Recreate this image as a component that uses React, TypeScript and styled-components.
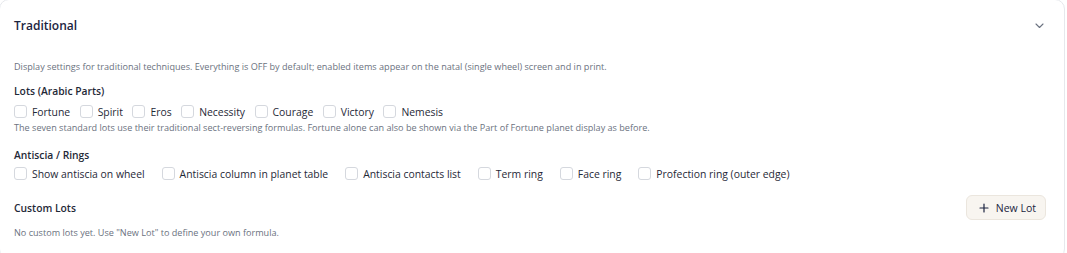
import React from "react";
import styled, { createGlobalStyle } from "styled-components";

const Global = createGlobalStyle`
  html, body { margin: 0; padding: 0; background: #ffffff; }
  body { font-family: "Open Sans", "Noto Sans", sans-serif; -webkit-font-smoothing: antialiased; }
  * { box-sizing: border-box; }
`;

const Card = styled.section`
  margin: -1px 2px 0 -1px;
  border: 1px solid #e6e8ec;
  border-radius: 10px;
  background: #ffffff;
  min-height: 260px;
`;

const Header = styled.div`
  display: flex;
  align-items: center;
  justify-content: space-between;
  height: 51px;
  padding: 0 14px 0 14px;
`;

const Title = styled.h2`
  margin: 0;
  font-size: 12px;
  font-weight: 600;
  color: #1b2440;
`;

const ChevronButton = styled.span`
  display: flex;
  align-items: center;
  justify-content: center;
  width: 22px;
  height: 22px;
  color: #6b7280;
`;

const Body = styled.div`
  padding: 9px 14px 0 14px;
  display: flex;
  flex-direction: column;
`;

const Description = styled.p<{ $top?: number }>`
  margin: ${(p) => p.$top ?? 0}px 0 0 0;
  font-size: 9.1px;
  line-height: 13px;
  color: #6b7280;
`;

const SectionTitle = styled.h3<{ $top: number }>`
  margin: ${(p) => p.$top}px 0 0 0;
  font-size: 10.3px;
  line-height: 16px;
  font-weight: 600;
  color: #1f2937;
`;

const CheckRow = styled.div<{ $gap: number; $top: number }>`
  display: flex;
  align-items: center;
  gap: ${(p) => p.$gap}px;
  margin-top: ${(p) => p.$top}px;
  height: 17px;
`;

const CheckItem = styled.label`
  display: flex;
  align-items: center;
  gap: 5px;
  font-size: 10.4px;
  color: #1f2937;
  white-space: nowrap;
`;

const Box = styled.span`
  width: 13px;
  height: 13px;
  border: 1px solid #d5d8de;
  border-radius: 3px;
  background: #ffffff;
  flex: none;
`;

const CustomHeader = styled.div`
  display: flex;
  align-items: center;
  justify-content: space-between;
  margin-top: 13px;
  padding-right: 4px;
`;

const NewLotButton = styled.button`
  display: flex;
  align-items: center;
  gap: 7px;
  height: 25px;
  padding: 0 9px 0 12px;
  border: 1px solid #ebe6de;
  border-radius: 6px;
  background: #f8f5f0;
  font-family: inherit;
  font-size: 10.5px;
  font-weight: 500;
  color: #1b2440;
`;

const lots = ["Fortune", "Spirit", "Eros", "Necessity", "Courage", "Victory", "Nemesis"];
const rings = [
  "Show antiscia on wheel",
  "Antiscia column in planet table",
  "Antiscia contacts list",
  "Term ring",
  "Face ring",
  "Profection ring (outer edge)",
];

export default function App() {
  return (
    <>
      <Global />
      <Card>
        <Header>
          <Title>Traditional</Title>
          <ChevronButton>
            <svg width="9" height="6" viewBox="0 0 9 6" fill="none">
              <path d="M1 1l3.5 3.5L8 1" stroke="currentColor" strokeWidth="1.1" strokeLinecap="round" strokeLinejoin="round" />
            </svg>
          </ChevronButton>
        </Header>
        <Body>
          <Description>
            Display settings for traditional techniques. Everything is OFF by default; enabled items appear on the natal (single wheel) screen and in print.
          </Description>
          <SectionTitle $top={10}>Lots (Arabic Parts)</SectionTitle>
          <CheckRow $gap={9.5} $top={4}>
            {lots.map((l) => (
              <CheckItem key={l}>
                <Box />
                {l}
              </CheckItem>
            ))}
          </CheckRow>
          <Description $top={1}>
            The seven standard lots use their traditional sect-reversing formulas. Fortune alone can also be shown via the Part of Fortune planet display as before.
          </Description>
          <SectionTitle $top={13}>Antiscia / Rings</SectionTitle>
          <CheckRow $gap={17} $top={2}>
            {rings.map((l) => (
              <CheckItem key={l}>
                <Box />
                {l}
              </CheckItem>
            ))}
          </CheckRow>
          <CustomHeader>
            <SectionTitle $top={0}>Custom Lots</SectionTitle>
            <NewLotButton>
              <svg width="10" height="10" viewBox="0 0 10 10" fill="none">
                <path d="M5 1v8M1 5h8" stroke="currentColor" strokeWidth="1.2" strokeLinecap="round" />
              </svg>
              New Lot
            </NewLotButton>
          </CustomHeader>
          <Description $top={6}>No custom lots yet. Use "New Lot" to define your own formula.</Description>
        </Body>
      </Card>
    </>
  );
}
